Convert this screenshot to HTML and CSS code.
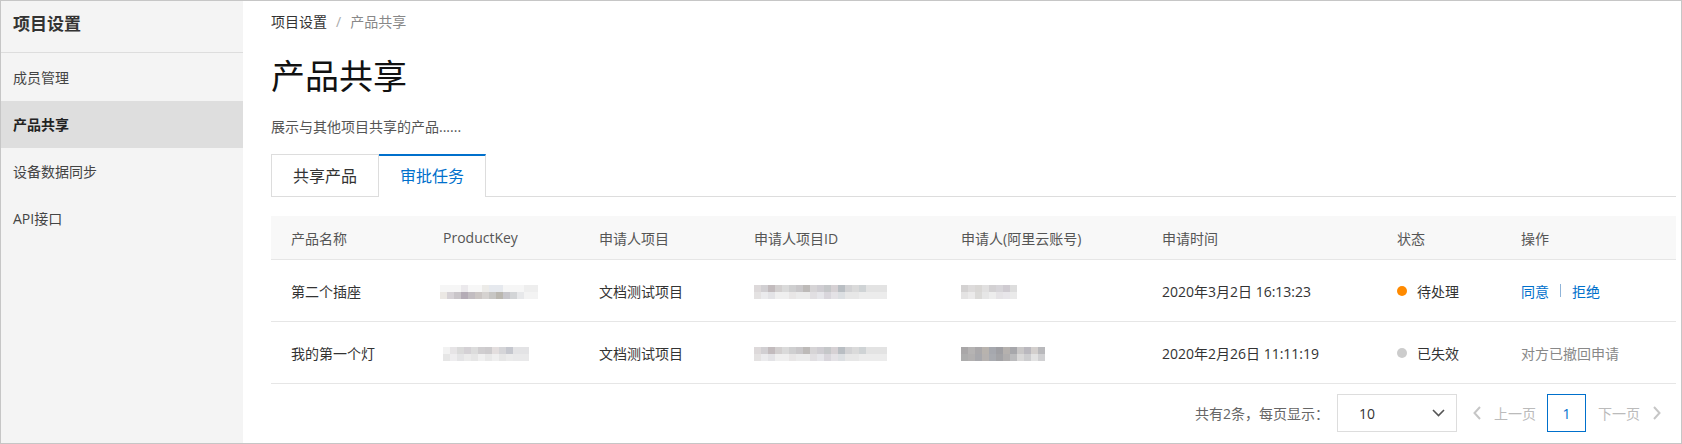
FILE: index.html
```html
<!DOCTYPE html>
<html lang="zh-CN">
<head>
<meta charset="utf-8">
<title>产品共享</title>
<link rel="stylesheet" href="styles.css">
</head>
<body>
<div class="frame">
  <aside class="sidebar">
    <div class="side-title">项目设置</div>
    <nav class="side-nav">
      <a class="side-item">成员管理</a>
      <a class="side-item active">产品共享</a>
      <a class="side-item">设备数据同步</a>
      <a class="side-item">API接口</a>
    </nav>
  </aside>
  <main class="main">
    <div class="breadcrumb"><span class="crumb">项目设置</span><span class="sep">/</span><span class="crumb current">产品共享</span></div>
    <h1 class="page-title">产品共享</h1>
    <p class="desc">展示与其他项目共享的产品......</p>
    <div class="tabs">
      <div class="tab">共享产品</div>
      <div class="tab active">审批任务</div>
    </div>
    <table class="grid">
      <colgroup>
        <col class="c1"><col class="c2"><col class="c3"><col class="c4"><col class="c5"><col class="c6"><col class="c7"><col class="c8">
      </colgroup>
      <thead>
        <tr>
          <th>产品名称</th><th>ProductKey</th><th>申请人项目</th><th>申请人项目ID</th><th>申请人(阿里云账号)</th><th>申请时间</th><th>状态</th><th>操作</th>
        </tr>
      </thead>
      <tbody>
        <tr>
          <td>第二个插座</td>
          <td><span class="mosaic mz-pk1"></span></td>
          <td>文档测试项目</td>
          <td><span class="mosaic mz-id1"></span></td>
          <td><span class="mosaic mz-ac1"></span></td>
          <td>2020年3月2日 16:13:23</td>
          <td><span class="status"><span class="dot pending"></span>待处理</span></td>
          <td><span class="actions"><a class="link">同意</a><span class="vsep"></span><a class="link">拒绝</a></span></td>
        </tr>
        <tr>
          <td>我的第一个灯</td>
          <td><span class="mosaic mz-pk2"></span></td>
          <td>文档测试项目</td>
          <td><span class="mosaic mz-id2"></span></td>
          <td><span class="mosaic mz-ac2"></span></td>
          <td>2020年2月26日 11:11:19</td>
          <td><span class="status"><span class="dot expired"></span>已失效</span></td>
          <td><span class="muted">对方已撤回申请</span></td>
        </tr>
      </tbody>
    </table>
    <div class="pager">
      <span class="total">共有2条，每页显示：</span>
      <div class="select"><span>10</span>
        <svg class="chev-down" width="13" height="8" viewBox="0 0 13 8"><path d="M1 1 L6.5 6.5 L12 1" fill="none" stroke="#555" stroke-width="1.6"/></svg>
      </div>
      <svg class="chev prev" width="8" height="14" viewBox="0 0 8 14"><path d="M7 1 L1.5 7 L7 13" fill="none" stroke="#c6c6c6" stroke-width="2"/></svg>
      <span class="pg-text prev-text">上一页</span>
      <span class="page-num">1</span>
      <span class="pg-text next-text">下一页</span>
      <svg class="chev next" width="8" height="14" viewBox="0 0 8 14"><path d="M1 1 L6.5 7 L1 13" fill="none" stroke="#c6c6c6" stroke-width="2"/></svg>
    </div>
  </main>
</div>
</body>
</html>
```
FILE: styles.css
```css
* { box-sizing: border-box; }
html, body { margin: 0; padding: 0; background: #fff; }
body {
  font-family: "Open Sans", "Noto Sans CJK SC", sans-serif;
  font-size: 14px;
  color: #333;
}
.frame {
  width: 1682px;
  height: 444px;
  border: 1px solid #c6c6c6;
  display: flex;
  overflow: hidden;
}
.sidebar {
  width: 242px;
  flex: none;
  background: #f4f4f4;
}
.side-title {
  height: 52px;
  border-bottom: 1px solid #dddddd;
  padding: 11px 12px 0;
  font-size: 17px;
  line-height: 24px;
  font-weight: 700;
  color: #333;
}
.side-nav { padding-top: 1px; display: flex; flex-direction: column; }
.side-item {
  display: block;
  height: 47px;
  line-height: 47px;
  padding-left: 12px;
  font-size: 14px;
  color: #444;
}
.side-item.active {
  background: #dedede;
  color: #222;
  font-weight: 700;
}
.main {
  flex: 1;
  min-width: 0;
  padding: 11px 5px 0 28px;
}
.breadcrumb { line-height: 20px; font-size: 14px; color: #333; }
.sep { color: #aaa; margin: 0 9px; }
.crumb.current { color: #888; }
.page-title {
  margin: 24px 0 0;
  font-size: 34px;
  line-height: 40px;
  font-weight: 400;
  color: #111;
}
.desc {
  margin: 21px 0 0;
  line-height: 20px;
  font-size: 14px;
  color: #555;
}
.tabs {
  margin-top: 17px;
  display: flex;
  height: 43px;
  border-bottom: 1px solid #dddddd;
}
.tab {
  width: 108px;
  height: 42px;
  border: 1px solid #dddddd;
  border-bottom: none;
  background: #fff;
  text-align: center;
  font-size: 16px;
  line-height: 42px;
  color: #333;
}
.tab.active {
  width: 107px;
  height: 43px;
  border-left: none;
  border-top: 2px solid #0070cc;
  line-height: 40px;
  color: #0070cc;
}
.grid {
  margin-top: 19px;
  width: 1405px;
  table-layout: fixed;
  border-collapse: separate;
  border-spacing: 0;
}
.c1 { width: 152px; }
.c2 { width: 156px; }
.c3 { width: 155px; }
.c4 { width: 207px; }
.c5 { width: 201px; }
.c6 { width: 235px; }
.c7 { width: 124px; }
.c8 { width: 175px; }
.grid th {
  height: 44px;
  background: #f8f8f8;
  border-bottom: 1px solid #e6e6e6;
  padding: 0 0 0 20px;
  text-align: left;
  font-weight: 400;
  color: #555;
  white-space: nowrap;
}
.grid td {
  height: 62px;
  border-bottom: 1px solid #e6e6e6;
  padding: 0 0 0 20px;
  color: #333;
  white-space: nowrap;
  vertical-align: middle;
}
.mosaic {
  display: inline-block;
  vertical-align: middle;
  height: 14px;
  background-repeat: no-repeat;
  background-size: 100% 7px;
  background-position: 0 0, 0 7px;
}
.mz-pk1 {
  width: 98px;
  margin-left: -3px;
  background-image:
    linear-gradient(90deg, #f6f6f6 0 21px, #ebe9ec 21px 28px, #f7f7f7 28px 42px, #ecebe8 42px 49px, #e6e9ee 49px 63px, #f6f6f6 63px 84px, #eeeeee 84px 98px),
    linear-gradient(90deg, #ebe8e4 0 7px, #d6d2d6 7px 14px, #c9c5c9 14px 21px, #b4acb6 21px 28px, #c2bdc1 28px 35px, #cbc6c4 35px 42px, #d5d2d0 42px 49px, #c7c6c4 49px 56px, #bab7b0 56px 63px, #c7c6cb 63px 70px, #d3d5d7 70px 77px, #e7e8ea 77px 84px, #f3f3f3 84px 98px);
}
.mz-pk2 {
  width: 86px;
  background-image:
    linear-gradient(90deg, #f2f2f2 0 7px, #e6e4e6 7px 14px, #dadada 14px 21px, #d4d1d5 21px 28px, #dcdcdc 28px 35px, #d0ced0 35px 42px, #cdcbcd 42px 49px, #e3dede 49px 56px, #d5d5d8 56px 63px, #c5c7ce 63px 70px, #e3e3e5 70px 86px),
    linear-gradient(90deg, #e6e6e6 0 7px, #eeedef 7px 14px, #e4e4e6 14px 21px, #ebebeb 21px 28px, #e6e6e6 28px 35px, #f0f0f0 35px 42px, #e8e8e8 42px 49px, #efefef 49px 56px, #e6e6e6 56px 63px, #ebebeb 63px 70px, #e9e9ea 70px 86px);
}
.mz-id1, .mz-id2 {
  width: 133px;
  background-image:
    linear-gradient(90deg, #ddd9da 0 7px, #d1cfd2 7px 14px, #c2bbbd 14px 21px, #d2cfcf 21px 28px, #dadada 28px 35px, #cfcfd0 35px 42px, #c9c7c9 42px 49px, #bdbab8 49px 56px, #d6d4d6 56px 63px, #cfcdd2 63px 70px, #c5c7c9 70px 77px, #d6d1d4 77px 84px, #b9bec3 84px 91px, #d2d2d4 91px 98px, #dadada 98px 105px, #cfd3d5 105px 112px, #e3e3e3 112px 133px),
    linear-gradient(90deg, #e4e2e2 0 7px, #ebebed 7px 14px, #e3e3e6 14px 21px, #efefef 21px 35px, #e8e6e6 35px 42px, #ebebeb 42px 56px, #e1dfe2 56px 63px, #e6e6ea 63px 70px, #d9d6dc 70px 77px, #e4e2e6 77px 84px, #dcdfe2 84px 91px, #e7e7e7 91px 105px, #ececec 105px 133px);
}
.mz-ac1 {
  width: 56px;
  background-image:
    linear-gradient(90deg, #d4d2d2 0 7px, #dddbdb 7px 14px, #d9d7d5 14px 21px, #e1e0e0 21px 28px, #d3d1d3 28px 35px, #d7d5d9 35px 42px, #cfcbd1 42px 49px, #dddddd 49px 56px),
    linear-gradient(90deg, #e4e3e3 0 7px, #ebeaea 7px 14px, #dbdad8 14px 21px, #e6e6e6 21px 28px, #ededed 28px 35px, #e5e3e6 35px 42px, #e8e6ea 42px 49px, #eaeaea 49px 56px);
}
.mz-ac2 {
  width: 84px;
  background-image:
    linear-gradient(90deg, #a9a7a8 0 7px, #b5b3b3 7px 14px, #aaa8aa 14px 21px, #b8b3ae 21px 28px, #a6a8ae 28px 35px, #9f9fa3 35px 42px, #b5b1ae 42px 49px, #a7a7ab 49px 56px, #c9c7c7 56px 63px, #bab8be 63px 70px, #d3cfcd 70px 77px, #b9b9bc 77px 84px),
    linear-gradient(90deg, #adadad 0 7px, #b2b0b0 7px 14px, #a8a8ac 14px 21px, #b6b2b0 21px 28px, #a9abb0 28px 35px, #a3a3a6 35px 42px, #b0aeae 42px 49px, #bbbbbd 49px 56px, #d9d8d8 56px 63px, #cdcdcf 63px 70px, #e2e2e2 70px 77px, #d0d0d2 77px 84px);
}
.status { display: inline-flex; align-items: center; }
.dot {
  width: 10px;
  height: 10px;
  border-radius: 50%;
  margin-right: 10px;
  flex: none;
}
.dot.pending { background: #ff8a00; }
.dot.expired { background: #cccccc; }
.actions { display: inline-flex; align-items: center; }
.link { color: #0070cc; }
.vsep {
  display: inline-block;
  width: 1px;
  height: 13px;
  background: #8fb4d9;
  margin: 0 11px;
}
.muted { color: #888; }
.pager {
  margin-top: 10px;
  height: 38px;
  display: flex;
  align-items: center;
  justify-content: flex-end;
  padding-right: 15px;
}
.total { color: #666; margin-right: 8px; }
.select {
  width: 120px;
  height: 38px;
  border: 1px solid #dddddd;
  display: flex;
  align-items: center;
  justify-content: space-between;
  padding: 0 11px 0 21px;
  color: #333;
}
.chev { flex: none; }
.chev.prev { margin-left: 16px; }
.pg-text { color: #bbbbbb; }
.prev-text { margin-left: 13px; }
.page-num {
  margin-left: 11px;
  width: 39px;
  height: 38px;
  border: 1px solid #0070cc;
  color: #0070cc;
  display: flex;
  align-items: center;
  justify-content: center;
}
.next-text { margin-left: 12px; }
.chev.next { margin-left: 13px; }
```
